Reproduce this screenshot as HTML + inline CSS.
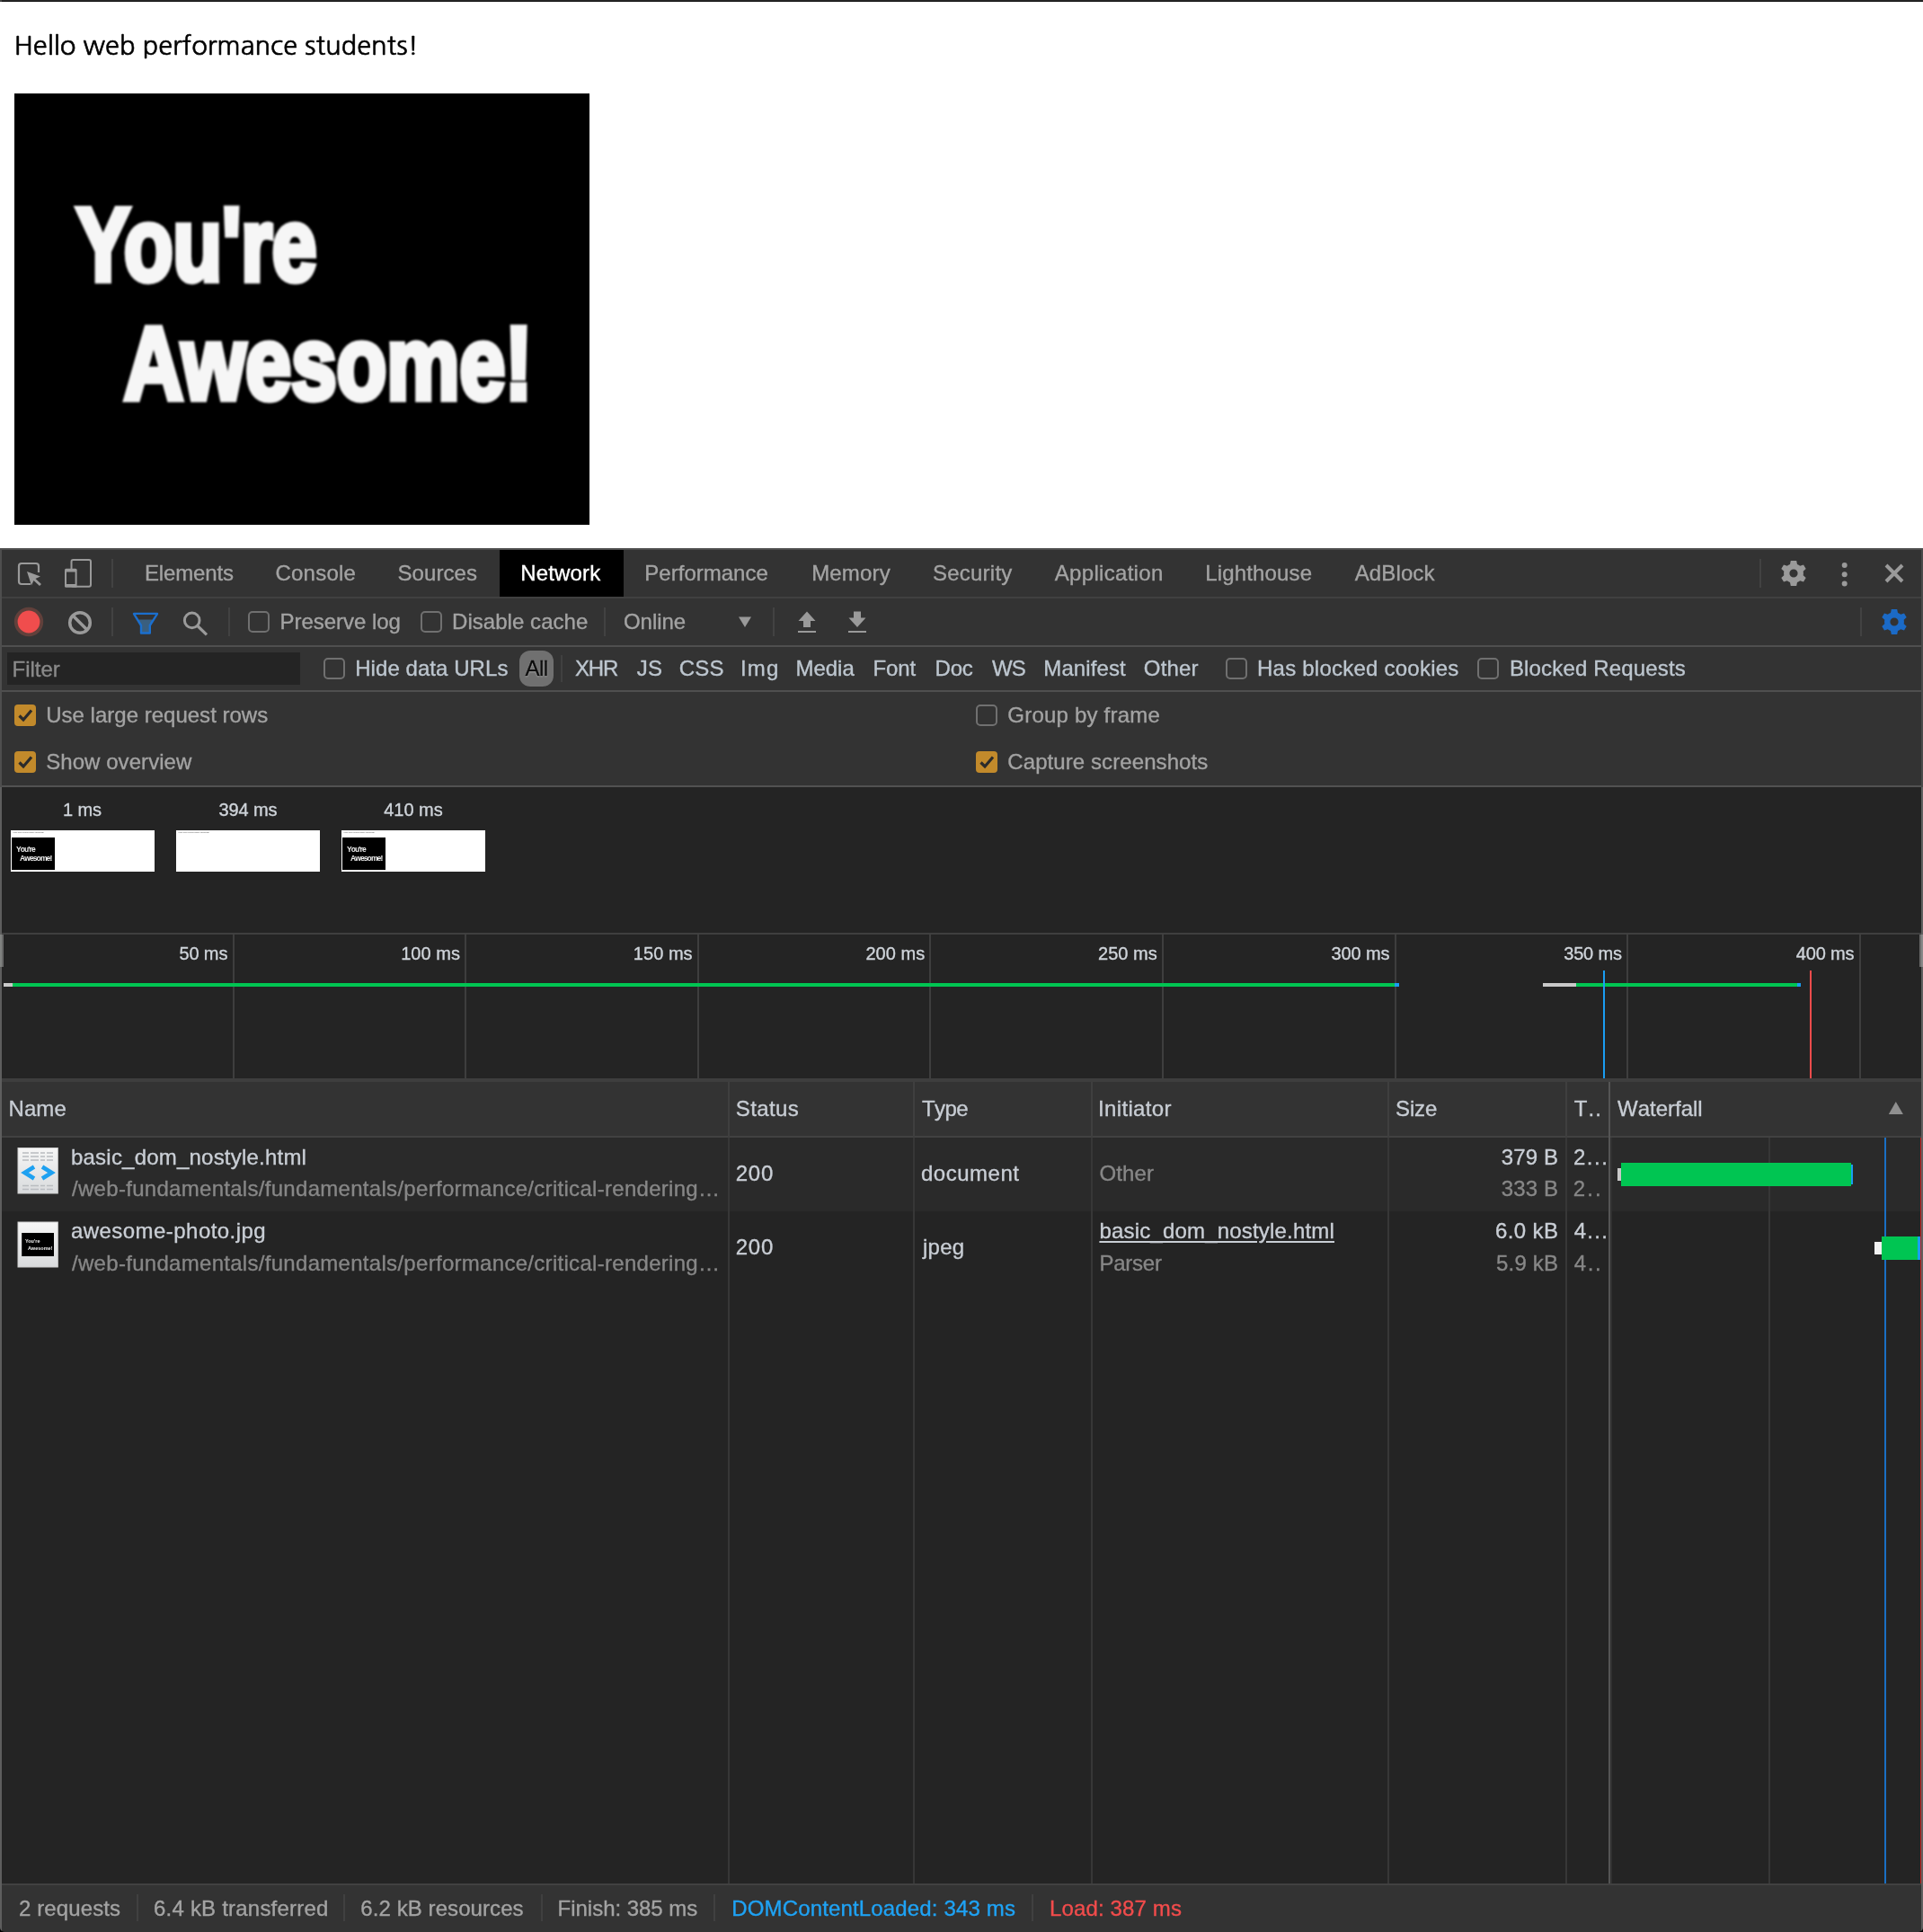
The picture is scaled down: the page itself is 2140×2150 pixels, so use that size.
<!DOCTYPE html>
<html><head><meta charset="utf-8"><title>basic_dom_nostyle.html</title>
<style>
html,body{margin:0;padding:0;}
body{width:2140px;height:2150px;position:relative;overflow:hidden;background:#fff;font-family:"Liberation Sans",sans-serif;font-size:24px;color:#a3a3a3;}
.abs{position:absolute;}
.t{position:absolute;white-space:nowrap;line-height:1;font-kerning:none;-webkit-text-stroke:0.35px;}
svg{position:absolute;left:0;top:0;overflow:visible;}
</style></head>
<body>
<div id="root" style="position:absolute;left:0;top:0;width:2140px;height:2150px;will-change:transform;">

<div class="abs" style="left:0px;top:0px;width:2140px;height:1px;background:#282828;"></div>
<div class="abs" style="left:0px;top:1px;width:2140px;height:1px;background:#161616;"></div>
<div class="abs" style="left:0px;top:0px;width:2px;height:2px;background:#444;"></div>
<div class="t" id="hello" style="left:15.7px;top:35.8px;font-family:NanumGothic,'Liberation Sans',sans-serif;font-size:29.05px;color:#000;-webkit-text-stroke:0.6px #000;">Hello web performance students!</div>
<div class="abs" id="photo" style="left:16px;top:104px;width:640px;height:480px;background:#000;"><svg width="640" height="480" viewBox="0 0 640 480"><g fill="#f6f6f6" stroke="#f6f6f6" stroke-width="7" stroke-linejoin="miter" stroke-miterlimit="2.5" font-family="Liberation Sans, sans-serif" font-weight="bold" style="filter:blur(0.9px)"><text x="69" y="207.5" font-size="114.5" textLength="267.5" lengthAdjust="spacingAndGlyphs">You're</text><text x="122" y="340" font-size="114.5" textLength="454.5" lengthAdjust="spacingAndGlyphs">Awesome!</text></g></svg></div>
<div class="abs" style="left:0px;top:610px;width:2140px;height:1540px;background:#242424;"></div>
<div class="abs" style="left:0px;top:610px;width:2140px;height:266px;background:#333333;"></div>
<div class="abs" style="left:0px;top:610px;width:2140px;height:2px;background:#4e4e4e;"></div>
<div class="abs" style="left:0px;top:664px;width:2140px;height:2px;background:#404040;"></div>
<div class="abs" style="left:0px;top:718px;width:2140px;height:2px;background:#4f4f4f;"></div>
<div class="abs" style="left:0px;top:768px;width:2140px;height:2px;background:#4f4f4f;"></div>
<div class="abs" style="left:0px;top:874px;width:2140px;height:2px;background:#525252;"></div>
<div class="abs" style="left:556px;top:612px;width:138px;height:52px;background:#000;"></div>
<div class="abs" style="left:124px;top:622px;width:2px;height:32px;background:#424242;"></div>
<div class="abs" style="left:1958px;top:622px;width:2px;height:32px;background:#424242;"></div>
<div class="abs" style="left:124px;top:676px;width:2px;height:32px;background:#424242;"></div>
<div class="abs" style="left:254px;top:676px;width:2px;height:32px;background:#424242;"></div>
<div class="abs" style="left:672px;top:676px;width:2px;height:32px;background:#424242;"></div>
<div class="abs" style="left:860px;top:676px;width:2px;height:32px;background:#424242;"></div>
<div class="abs" style="left:2070px;top:676px;width:2px;height:32px;background:#424242;"></div>
<div class="abs" style="left:8px;top:726px;width:326px;height:36px;background:#242424;"></div>
<div class="abs" style="left:624px;top:729px;width:2px;height:30px;background:#404040;"></div>
<div class="abs" style="left:578px;top:724px;width:38px;height:40px;background:#707070;border-radius:12px;"></div>
<div class="abs" style="left:276px;top:680px;width:20px;height:20px;border-radius:5px;border:2px solid #707070;"></div>
<div class="abs" style="left:468px;top:680px;width:20px;height:20px;border-radius:5px;border:2px solid #707070;"></div>
<div class="abs" style="left:360px;top:732px;width:20px;height:20px;border-radius:5px;border:2px solid #707070;"></div>
<div class="abs" style="left:1364px;top:732px;width:20px;height:20px;border-radius:5px;border:2px solid #707070;"></div>
<div class="abs" style="left:1644px;top:732px;width:20px;height:20px;border-radius:5px;border:2px solid #707070;"></div>
<div class="abs" style="left:16px;top:784px;width:24px;height:24px;border-radius:4px;background:#c28a2b;"><svg width="24" height="24" viewBox="0 0 24 24"><path d="M5.5 12.5 L10 17 L19 6.5" fill="none" stroke="#2b2b2b" stroke-width="3.2"/></svg></div>
<div class="abs" style="left:16px;top:836px;width:24px;height:24px;border-radius:4px;background:#c28a2b;"><svg width="24" height="24" viewBox="0 0 24 24"><path d="M5.5 12.5 L10 17 L19 6.5" fill="none" stroke="#2b2b2b" stroke-width="3.2"/></svg></div>
<div class="abs" style="left:1086px;top:784px;width:20px;height:20px;border-radius:5px;border:2px solid #707070;"></div>
<div class="abs" style="left:1086px;top:836px;width:24px;height:24px;border-radius:4px;background:#c28a2b;"><svg width="24" height="24" viewBox="0 0 24 24"><path d="M5.5 12.5 L10 17 L19 6.5" fill="none" stroke="#2b2b2b" stroke-width="3.2"/></svg></div>
<svg width="2140" height="2150" viewBox="0 0 2140 2150" fill="none">
<!-- inspect -->
<path d="M34 650 H24 a3 3 0 0 1 -3 -3 V630 a3 3 0 0 1 3 -3 H40 a3 3 0 0 1 3 3 V637" stroke="#9a9a9a" stroke-width="2.2"/>
<path d="M30 636 L45 641.5 L39.5 644 L46 650 L44 652 L37.5 646 L35 651.5 Z" fill="#9a9a9a"/>
<!-- device -->
<rect x="79.5" y="623" width="21.5" height="29.7" rx="2" stroke="#9a9a9a" stroke-width="2"/>
<rect x="72" y="632.7" width="13.6" height="21" rx="1.5" fill="#9a9a9a"/>
<rect x="74" y="636.5" width="9.6" height="13.5" fill="#333"/>
<!-- gear -->
<g transform="translate(1996 638)" fill="#9a9a9a"><path id="gear" d="M0-14 L3.2-14 L4-10 A10.5 10.5 0 0 1 7.2-8.2 L11-9.6 L13.7-4.9 L10.7-2.2 A10.5 10.5 0 0 1 10.7 2.2 L13.7 4.9 L11 9.6 L7.2 8.2 A10.5 10.5 0 0 1 4 10 L3.2 14 L-3.2 14 L-4 10 A10.5 10.5 0 0 1 -7.2 8.2 L-11 9.6 L-13.7 4.9 L-10.7 2.2 A10.5 10.5 0 0 1 -10.7-2.2 L-13.7-4.9 L-11-9.6 L-7.2-8.2 A10.5 10.5 0 0 1 -4-10 L-3.2-14 Z M0-4.6 A4.6 4.6 0 1 0 0 4.6 A4.6 4.6 0 1 0 0-4.6 Z" fill-rule="evenodd"/></g>
<g transform="translate(2108 692)" fill="#1b6ac6"><use href="#gear"/></g>
<!-- dots -->
<circle cx="2052.7" cy="629" r="3" fill="#9a9a9a"/><circle cx="2052.7" cy="639.3" r="3" fill="#9a9a9a"/><circle cx="2052.7" cy="649.6" r="3" fill="#9a9a9a"/>
<!-- close -->
<path d="M2099 629 L2117 647 M2117 629 L2099 647" stroke="#9a9a9a" stroke-width="4"/>
<!-- record -->
<circle cx="32" cy="692" r="16.2" fill="#61403b"/><circle cx="32" cy="692" r="12.4" fill="#f04d4d"/>
<!-- clear -->
<circle cx="89" cy="693" r="11.3" stroke="#9a9a9a" stroke-width="3.5"/><path d="M81 685 L97 701" stroke="#9a9a9a" stroke-width="3.5"/>
<!-- filter -->
<path d="M149 683 H175 L166.8 696 V704.5 H157 V696 Z" fill="#3a5f7f" stroke="#1b6fce" stroke-width="2.4" stroke-linejoin="round"/>
<path d="M151 684 H173 L169.5 689.5 H154.5 Z" fill="#333"/>
<!-- search -->
<circle cx="213.7" cy="690.4" r="8.3" stroke="#9a9a9a" stroke-width="3"/><path d="M219.8 696.5 L230 706.3" stroke="#9a9a9a" stroke-width="3.2"/>
<!-- dropdown arrow -->
<path d="M822 686.5 H836 L829 698 Z" fill="#9a9a9a"/>
<!-- upload -->
<path d="M898 680.6 L907.5 691 H902 V698 H894 V691 H888.5 Z" fill="#9a9a9a"/><rect x="888" y="702" width="20" height="2" fill="#9a9a9a"/>
<!-- download -->
<path d="M954 698 L963.5 687.6 H958 V680.6 H950 V687.6 H944.5 Z" fill="#9a9a9a"/><rect x="944" y="702" width="20" height="2" fill="#9a9a9a"/>
</svg>
<div class="abs" style="left:12px;top:924px;width:160px;height:46px;background:#fff;overflow:hidden;"><div class="t" style="left:2px;top:1.5px;font-size:2.4px;color:#555;-webkit-text-stroke:0;">Hello web performance students!</div><div class="abs" style="left:1px;top:8px;width:48px;height:36px;background:#000;"><div class="t" style="left:5px;top:9px;font-size:8.5px;font-weight:bold;color:#eee;letter-spacing:-0.9px;-webkit-text-stroke:0;">You're</div><div class="t" style="left:9px;top:19px;font-size:8.5px;font-weight:bold;color:#eee;letter-spacing:-0.9px;-webkit-text-stroke:0;">Awesome!</div></div></div>
<div class="abs" style="left:196px;top:924px;width:160px;height:46px;background:#fff;overflow:hidden;"><div class="t" style="left:2px;top:1.5px;font-size:2.4px;color:#555;-webkit-text-stroke:0;">Hello web performance students!</div></div>
<div class="abs" style="left:380px;top:924px;width:160px;height:46px;background:#fff;overflow:hidden;"><div class="t" style="left:2px;top:1.5px;font-size:2.4px;color:#555;-webkit-text-stroke:0;">Hello web performance students!</div><div class="abs" style="left:1px;top:8px;width:48px;height:36px;background:#000;"><div class="t" style="left:5px;top:9px;font-size:8.5px;font-weight:bold;color:#eee;letter-spacing:-0.9px;-webkit-text-stroke:0;">You're</div><div class="t" style="left:9px;top:19px;font-size:8.5px;font-weight:bold;color:#eee;letter-spacing:-0.9px;-webkit-text-stroke:0;">Awesome!</div></div></div>
<div class="abs" style="left:0px;top:1038px;width:2140px;height:2px;background:#3f3f3f;"></div>
<div class="abs" style="left:259px;top:1040px;width:2px;height:160px;background:#3e3e3e;"></div>
<div class="abs" style="left:517px;top:1040px;width:2px;height:160px;background:#3e3e3e;"></div>
<div class="abs" style="left:776px;top:1040px;width:2px;height:160px;background:#3e3e3e;"></div>
<div class="abs" style="left:1034px;top:1040px;width:2px;height:160px;background:#3e3e3e;"></div>
<div class="abs" style="left:1293px;top:1040px;width:2px;height:160px;background:#3e3e3e;"></div>
<div class="abs" style="left:1552px;top:1040px;width:2px;height:160px;background:#3e3e3e;"></div>
<div class="abs" style="left:1810px;top:1040px;width:2px;height:160px;background:#3e3e3e;"></div>
<div class="abs" style="left:2069px;top:1040px;width:2px;height:160px;background:#3e3e3e;"></div>
<div class="abs" style="left:4px;top:1094px;width:10px;height:4px;background:#c9c9c9;"></div>
<div class="abs" style="left:14px;top:1094px;width:1538px;height:4px;background:#00c552;"></div>
<div class="abs" style="left:1552px;top:1094px;width:5px;height:4px;background:#1a9df2;"></div>
<div class="abs" style="left:1717px;top:1094px;width:37px;height:4px;background:#c9c9c9;"></div>
<div class="abs" style="left:1754px;top:1094px;width:246px;height:4px;background:#00c552;"></div>
<div class="abs" style="left:2000px;top:1094px;width:4px;height:4px;background:#1a9df2;"></div>
<div class="abs" style="left:1784px;top:1080px;width:2px;height:120px;background:#1a9df2;"></div>
<div class="abs" style="left:2014px;top:1080px;width:2px;height:120px;background:#f24c4c;"></div>
<div class="abs" style="left:0px;top:1200px;width:2140px;height:66px;background:#333333;"></div>
<div class="abs" style="left:0px;top:1200px;width:2140px;height:4px;background:#3e3e3e;"></div>
<div class="abs" style="left:0px;top:1264px;width:2140px;height:2px;background:#414141;"></div>
<div class="abs" style="left:0px;top:1266px;width:2140px;height:82px;background:#2a2a2a;"></div>
<div class="abs" style="left:810px;top:1204px;width:2px;height:62px;background:#3f3f3f;"></div>
<div class="abs" style="left:810px;top:1266px;width:2px;height:830px;background:#373737;"></div>
<div class="abs" style="left:1016px;top:1204px;width:2px;height:62px;background:#3f3f3f;"></div>
<div class="abs" style="left:1016px;top:1266px;width:2px;height:830px;background:#373737;"></div>
<div class="abs" style="left:1214px;top:1204px;width:2px;height:62px;background:#3f3f3f;"></div>
<div class="abs" style="left:1214px;top:1266px;width:2px;height:830px;background:#373737;"></div>
<div class="abs" style="left:1544px;top:1204px;width:2px;height:62px;background:#3f3f3f;"></div>
<div class="abs" style="left:1544px;top:1266px;width:2px;height:830px;background:#373737;"></div>
<div class="abs" style="left:1742px;top:1204px;width:2px;height:62px;background:#3f3f3f;"></div>
<div class="abs" style="left:1742px;top:1266px;width:2px;height:830px;background:#373737;"></div>
<div class="abs" style="left:1790px;top:1204px;width:2px;height:62px;background:#555;"></div>
<div class="abs" style="left:1790px;top:1266px;width:2px;height:830px;background:#545454;"></div>
<div class="abs" style="left:1792px;top:1266px;width:2px;height:830px;background:#313131;"></div>
<div class="abs" style="left:1968px;top:1266px;width:2px;height:830px;background:#373737;"></div>
<div class="abs" style="left:2097px;top:1266px;width:2px;height:830px;background:#1a6fc4;"></div>
<div class="abs" style="left:2136.5px;top:1266px;width:1.5px;height:830px;background:#c0211f;"></div>
<div class="abs" style="left:1800px;top:1300px;width:4px;height:14px;background:#c9c9c9;"></div>
<div class="abs" style="left:1804px;top:1294px;width:256px;height:26px;background:#00c552;"></div>
<div class="abs" style="left:2060px;top:1295.6px;width:2px;height:22px;background:#1a9df2;"></div>
<div class="abs" style="left:2086px;top:1382px;width:8px;height:14px;background:#f2f2f2;"></div>
<div class="abs" style="left:2094px;top:1376px;width:40px;height:26px;background:#00c552;"></div>
<div class="abs" style="left:2134px;top:1376px;width:3px;height:26px;background:#1a9df2;"></div>
<svg width="2140" height="2150"><path d="M2101.8 1240 L2117.9 1240 L2109.8 1226 Z" fill="#8f8f8f"/></svg>
<svg width="2140" height="2150" viewBox="0 0 2140 2150">
<defs><linearGradient id="pg" x1="0" y1="0" x2="0" y2="1"><stop offset="0" stop-color="#f6f6f6"/><stop offset="1" stop-color="#d9dbdd"/></linearGradient></defs>
<rect x="20" y="1277.5" width="44.3" height="50.5" fill="url(#pg)" stroke="#cfcfcf" stroke-width="1"/>
<g stroke="#b9bcc0" stroke-width="1.6"><path d="M25 1283 H59 M25 1287 H59 M25 1291 H59 M25 1319.5 H59 M25 1323.5 H59" stroke-dasharray="7 2 9 2 5 2"/></g>
<path d="M38 1298.5 L27.5 1305 L38 1311.5 M47 1298.5 L57.5 1305 L47 1311.5" fill="none" stroke="#1ea1f1" stroke-width="4.6"/>
<rect x="20" y="1360" width="44.3" height="50" fill="url(#pg)" stroke="#cfcfcf" stroke-width="1"/>
<rect x="24.2" y="1372" width="35.8" height="26" fill="#000"/>
<g fill="#eee" font-family="Liberation Sans, sans-serif" font-weight="bold" font-size="5.5"><text x="28" y="1383">You're</text><text x="31" y="1390.5">Awesome!</text></g>
</svg>
<div class="abs" style="left:0px;top:2096px;width:2140px;height:54px;background:#333333;"></div>
<div class="abs" style="left:0px;top:2096px;width:2140px;height:2px;background:#414141;"></div>
<div class="abs" style="left:152px;top:2108px;width:2px;height:30px;background:#404040;"></div>
<div class="abs" style="left:382px;top:2108px;width:2px;height:30px;background:#404040;"></div>
<div class="abs" style="left:602px;top:2108px;width:2px;height:30px;background:#404040;"></div>
<div class="abs" style="left:794px;top:2108px;width:2px;height:30px;background:#404040;"></div>
<div class="abs" style="left:1148px;top:2108px;width:2px;height:30px;background:#404040;"></div>
<div class="abs" style="left:0px;top:612px;width:2px;height:264px;background:#4e4e4e;"></div>
<div class="abs" style="left:0px;top:876px;width:2px;height:1274px;background:#5e5e5e;"></div>
<div class="abs" style="left:2138px;top:612px;width:2px;height:264px;background:#4a4a4a;"></div>
<div class="abs" style="left:2138px;top:876px;width:2px;height:1274px;background:#606060;"></div>
<svg width="2140" height="2150"><path d="M2135 2150 H2140 V2145 A5 5 0 0 1 2135 2150Z M5 2150 H0 V2145 A5 5 0 0 0 5 2150Z" fill="#000"/></svg>
<div class="abs" style="left:0px;top:1040px;width:2px;height:36px;background:#808280;"></div>
<div class="abs" style="left:2px;top:1040px;width:2px;height:36px;background:#686868;"></div>
<div class="abs" style="left:2136px;top:1040px;width:2px;height:36px;background:#6c6c6c;"></div>
<div class="abs" style="left:2138px;top:1040px;width:2px;height:36px;background:#888;"></div>
<div class="t" style="left:161.00px;top:626.08px;font-size:24px;color:#a3a3a3;letter-spacing:-0.149px;">Elements</div>
<div class="t" style="left:306.50px;top:626.08px;font-size:24px;color:#a3a3a3;letter-spacing:0.215px;">Console</div>
<div class="t" style="left:442.50px;top:626.08px;font-size:24px;color:#a3a3a3;letter-spacing:0.076px;">Sources</div>
<div class="t" style="left:579.20px;top:626.08px;font-size:24px;color:#ffffff;letter-spacing:0.163px;">Network</div>
<div class="t" style="left:717.30px;top:626.08px;font-size:24px;color:#a3a3a3;letter-spacing:0.016px;">Performance</div>
<div class="t" style="left:903.20px;top:626.08px;font-size:24px;color:#a3a3a3;letter-spacing:0.166px;">Memory</div>
<div class="t" style="left:1038.00px;top:626.08px;font-size:24px;color:#a3a3a3;letter-spacing:0.229px;">Security</div>
<div class="t" style="left:1173.80px;top:626.08px;font-size:24px;color:#a3a3a3;letter-spacing:0.304px;">Application</div>
<div class="t" style="left:1341.30px;top:626.08px;font-size:24px;color:#a3a3a3;letter-spacing:0.146px;">Lighthouse</div>
<div class="t" style="left:1507.70px;top:626.08px;font-size:24px;color:#a3a3a3;letter-spacing:0.126px;">AdBlock</div>
<div class="t" style="left:311.50px;top:679.78px;font-size:24px;color:#a3a3a3;letter-spacing:-0.035px;">Preserve log</div>
<div class="t" style="left:503.00px;top:679.78px;font-size:24px;color:#a3a3a3;letter-spacing:0.050px;">Disable cache</div>
<div class="t" style="left:694.00px;top:679.78px;font-size:24px;color:#a3a3a3;letter-spacing:-0.065px;">Online</div>
<div class="t" style="left:13.60px;top:733.08px;font-size:24px;color:#8a8a8a;letter-spacing:-0.028px;">Filter</div>
<div class="t" style="left:395.20px;top:731.68px;font-size:24px;color:#bdc6cf;letter-spacing:0.060px;">Hide data URLs</div>
<div class="t" style="left:584.40px;top:731.68px;font-size:24px;color:#0c0c0c;letter-spacing:-0.470px;text-shadow:0 1px 1.5px rgba(255,255,255,.6);">All</div>
<div class="t" style="left:640.00px;top:731.68px;font-size:24px;color:#bdc6cf;letter-spacing:-1.170px;">XHR</div>
<div class="t" style="left:708.80px;top:731.68px;font-size:24px;color:#bdc6cf;letter-spacing:0.200px;">JS</div>
<div class="t" style="left:755.80px;top:731.68px;font-size:24px;color:#bdc6cf;letter-spacing:0.180px;">CSS</div>
<div class="t" style="left:823.90px;top:731.68px;font-size:24px;color:#bdc6cf;letter-spacing:1.220px;">Img</div>
<div class="t" style="left:885.50px;top:731.68px;font-size:24px;color:#bdc6cf;letter-spacing:-0.030px;">Media</div>
<div class="t" style="left:971.50px;top:731.68px;font-size:24px;color:#bdc6cf;letter-spacing:-0.085px;">Font</div>
<div class="t" style="left:1040.50px;top:731.68px;font-size:24px;color:#bdc6cf;letter-spacing:-0.190px;">Doc</div>
<div class="t" style="left:1104.00px;top:731.68px;font-size:24px;color:#bdc6cf;letter-spacing:-0.952px;">WS</div>
<div class="t" style="left:1161.30px;top:731.68px;font-size:24px;color:#bdc6cf;letter-spacing:0.095px;">Manifest</div>
<div class="t" style="left:1272.80px;top:731.68px;font-size:24px;color:#bdc6cf;letter-spacing:0.192px;">Other</div>
<div class="t" style="left:1399.00px;top:731.68px;font-size:24px;color:#bdc6cf;letter-spacing:0.233px;">Has blocked cookies</div>
<div class="t" style="left:1679.90px;top:731.68px;font-size:24px;color:#bdc6cf;letter-spacing:0.164px;">Blocked Requests</div>
<div class="t" style="left:51.20px;top:784.08px;font-size:24px;color:#a3a3a3;letter-spacing:0.011px;">Use large request rows</div>
<div class="t" style="left:51.20px;top:835.58px;font-size:24px;color:#a3a3a3;letter-spacing:0.061px;">Show overview</div>
<div class="t" style="left:1121.30px;top:784.08px;font-size:24px;color:#a3a3a3;letter-spacing:0.209px;">Group by frame</div>
<div class="t" style="left:1121.30px;top:835.58px;font-size:24px;color:#a3a3a3;letter-spacing:0.086px;">Capture screenshots</div>
<div class="t" style="left:70.00px;top:891.47px;font-size:20px;color:#cfd4da;letter-spacing:-0.113px;">1 ms</div>
<div class="t" style="left:243.40px;top:891.47px;font-size:20px;color:#cfd4da;letter-spacing:-0.097px;">394 ms</div>
<div class="t" style="left:427.20px;top:891.47px;font-size:20px;color:#cfd4da;letter-spacing:-0.017px;">410 ms</div>
<div class="t" style="left:199.40px;top:1051.47px;font-size:20px;color:#cfd4da;letter-spacing:-0.116px;">50 ms</div>
<div class="t" style="left:446.20px;top:1051.47px;font-size:20px;color:#cfd4da;letter-spacing:0.043px;">100 ms</div>
<div class="t" style="left:704.80px;top:1051.47px;font-size:20px;color:#cfd4da;letter-spacing:0.043px;">150 ms</div>
<div class="t" style="left:963.40px;top:1051.47px;font-size:20px;color:#cfd4da;letter-spacing:0.043px;">200 ms</div>
<div class="t" style="left:1222.00px;top:1051.47px;font-size:20px;color:#cfd4da;letter-spacing:0.043px;">250 ms</div>
<div class="t" style="left:1481.60px;top:1051.47px;font-size:20px;color:#cfd4da;letter-spacing:-0.157px;">300 ms</div>
<div class="t" style="left:1740.20px;top:1051.47px;font-size:20px;color:#cfd4da;letter-spacing:-0.157px;">350 ms</div>
<div class="t" style="left:1998.80px;top:1051.47px;font-size:20px;color:#cfd4da;letter-spacing:-0.157px;">400 ms</div>
<div class="t" style="left:9.50px;top:1222.08px;font-size:24px;color:#c8cdd4;letter-spacing:0.076px;">Name</div>
<div class="t" style="left:818.80px;top:1222.08px;font-size:24px;color:#c8cdd4;letter-spacing:0.372px;">Status</div>
<div class="t" style="left:1026.00px;top:1222.08px;font-size:24px;color:#c8cdd4;letter-spacing:-0.595px;">Type</div>
<div class="t" style="left:1222.00px;top:1222.08px;font-size:24px;color:#c8cdd4;letter-spacing:0.349px;">Initiator</div>
<div class="t" style="left:1553.00px;top:1222.08px;font-size:24px;color:#c8cdd4;letter-spacing:-0.113px;">Size</div>
<div class="t" style="left:1751.70px;top:1222.08px;font-size:24px;color:#c8cdd4;letter-spacing:1.066px;">T..</div>
<div class="t" style="left:1800.00px;top:1222.08px;font-size:24px;color:#c8cdd4;">Waterfall</div>
<div class="t" style="left:79.00px;top:1275.68px;font-size:24px;color:#c9ced5;letter-spacing:0.213px;">basic_dom_nostyle.html</div>
<div class="t" style="left:80.00px;top:1311.08px;font-size:24px;color:#878787;letter-spacing:0.295px;">/web-fundamentals/fundamentals/performance/critical-rendering…</div>
<div class="t" style="left:818.80px;top:1293.88px;font-size:24px;color:#c9ced5;letter-spacing:0.702px;">200</div>
<div class="t" style="left:1025.00px;top:1293.88px;font-size:24px;color:#c9ced5;letter-spacing:0.510px;">document</div>
<div class="t" style="left:1223.40px;top:1293.88px;font-size:24px;color:#878787;letter-spacing:0.142px;">Other</div>
<div class="t" style="left:1670.80px;top:1275.68px;font-size:24px;color:#c9ced5;letter-spacing:0.122px;">379 B</div>
<div class="t" style="left:1670.80px;top:1311.48px;font-size:24px;color:#878787;letter-spacing:0.122px;">333 B</div>
<div class="t" style="left:1750.90px;top:1275.68px;font-size:24px;color:#c9ced5;letter-spacing:1.572px;">2...</div>
<div class="t" style="left:1750.70px;top:1311.48px;font-size:24px;color:#878787;letter-spacing:2.142px;">2..</div>
<div class="t" style="left:79.00px;top:1357.68px;font-size:24px;color:#c9ced5;letter-spacing:0.449px;">awesome-photo.jpg</div>
<div class="t" style="left:80.00px;top:1393.58px;font-size:24px;color:#878787;letter-spacing:0.295px;">/web-fundamentals/fundamentals/performance/critical-rendering…</div>
<div class="t" style="left:818.80px;top:1375.58px;font-size:24px;color:#c9ced5;letter-spacing:0.702px;">200</div>
<div class="t" style="left:1027.00px;top:1375.58px;font-size:24px;color:#c9ced5;letter-spacing:0.258px;">jpeg</div>
<div class="t" style="left:1223.40px;top:1357.68px;font-size:24px;color:#c9ced5;letter-spacing:0.189px;text-decoration:underline;text-underline-offset:3px;">basic_dom_nostyle.html</div>
<div class="t" style="left:1223.40px;top:1393.58px;font-size:24px;color:#878787;letter-spacing:-0.219px;">Parser</div>
<div class="t" style="left:1664.00px;top:1357.68px;font-size:24px;color:#c9ced5;letter-spacing:0.394px;">6.0 kB</div>
<div class="t" style="left:1665.00px;top:1393.58px;font-size:24px;color:#878787;letter-spacing:0.194px;">5.9 kB</div>
<div class="t" style="left:1751.70px;top:1357.68px;font-size:24px;color:#c9ced5;letter-spacing:1.305px;">4...</div>
<div class="t" style="left:1751.70px;top:1393.58px;font-size:24px;color:#878787;letter-spacing:1.642px;">4..</div>
<div class="t" style="left:21.00px;top:2112.28px;font-size:24px;color:#a3a3a3;letter-spacing:0.104px;">2 requests</div>
<div class="t" style="left:171.00px;top:2112.28px;font-size:24px;color:#a3a3a3;letter-spacing:0.211px;">6.4 kB transferred</div>
<div class="t" style="left:401.30px;top:2112.28px;font-size:24px;color:#a3a3a3;letter-spacing:0.081px;">6.2 kB resources</div>
<div class="t" style="left:620.60px;top:2112.28px;font-size:24px;color:#a3a3a3;letter-spacing:-0.028px;">Finish: 385 ms</div>
<div class="t" style="left:814.20px;top:2112.28px;font-size:24px;color:#1fa3f5;letter-spacing:0.158px;">DOMContentLoaded: 343 ms</div>
<div class="t" style="left:1168.00px;top:2112.28px;font-size:24px;color:#f24c4c;letter-spacing:0.143px;">Load: 387 ms</div>

</div>
</body></html>
